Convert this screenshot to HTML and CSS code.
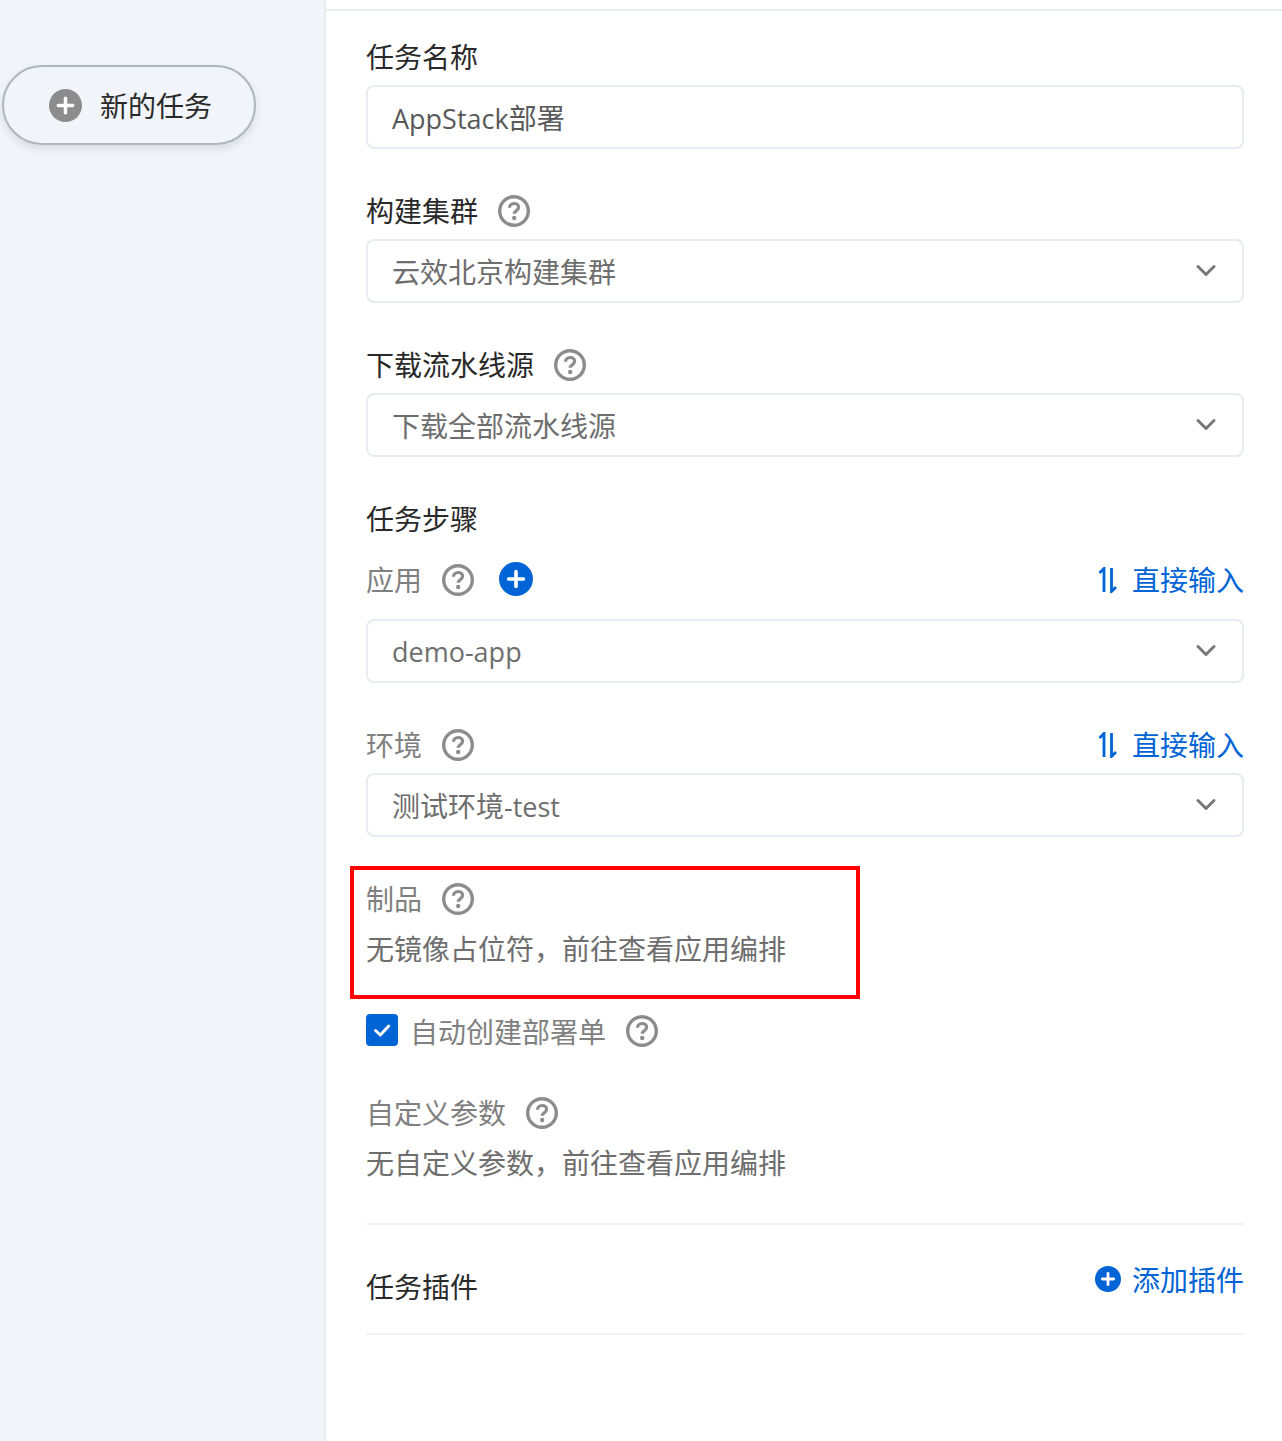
FILE: index.html
```html
<!DOCTYPE html>
<html lang="zh-CN">
<head>
<meta charset="utf-8">
<title>任务</title>
<link rel="stylesheet" href="styles.css">
</head>
<body>
<svg class="sprites" width="0" height="0" aria-hidden="true">
  <symbol id="help" viewBox="0 0 32 32">
    <circle cx="16" cy="16" r="14.300" fill="none" stroke="currentColor" stroke-width="3.400"/>
    <path d="M11.500 12.800c0-2.600 2-4.300 4.600-4.300s4.500 1.500 4.500 3.800c0 3.400-4.400 3.500-4.400 6.500" fill="none" stroke="currentColor" stroke-width="3.200"/>
    <circle cx="16.200" cy="23" r="2.200" fill="currentColor"/>
  </symbol>
  <symbol id="plus" viewBox="0 0 32 32">
    <circle cx="16" cy="16" r="16" fill="currentColor"/>
    <path d="M16 9v14M9 16h14" fill="none" stroke="#fff" stroke-width="3.400" stroke-linecap="round"/>
  </symbol>
  <symbol id="chev" viewBox="0 0 20 14">
    <path d="M2 2.500l8 8 8-8" fill="none" stroke="currentColor" stroke-width="3" stroke-linecap="round" stroke-linejoin="round"/>
  </symbol>
  <symbol id="swap" viewBox="0 0 20 26">
    <path d="M1.500 6L6 1.500V25M13.500 1v23.500L18 20" fill="none" stroke="currentColor" stroke-width="2.800"/>
  </symbol>
</svg>
<div class="layout">
  <aside class="sidebar">
    <button class="new-task" type="button">
      <svg class="new-task-icon"><use href="#plus"/></svg>
      <span>新的任务</span>
    </button>
  </aside>
  <main class="panel">
    <div class="form">
      <section class="field">
        <div class="label"><span class="text">任务名称</span></div>
        <div class="control control-input"><span class="low"><span class="latin">AppStack</span>部署</span></div>
      </section>
      <section class="field">
        <div class="label"><span class="text">构建集群</span><svg class="help"><use href="#help"/></svg></div>
        <div class="control"><span>云效北京构建集群</span><svg class="chev"><use href="#chev"/></svg></div>
      </section>
      <section class="field">
        <div class="label"><span class="text">下载流水线源</span><svg class="help"><use href="#help"/></svg></div>
        <div class="control"><span>下载全部流水线源</span><svg class="chev"><use href="#chev"/></svg></div>
      </section>
      <section class="field">
        <div class="label"><span class="text">任务步骤</span></div>
        <div class="sublabel sublabel-app">
          <span class="muted text">应用</span><svg class="help"><use href="#help"/></svg><svg class="add"><use href="#plus"/></svg>
          <a class="link"><svg class="swap"><use href="#swap"/></svg><span class="text">直接输入</span></a>
        </div>
        <div class="control control-app"><span class="latin low">demo-app</span><svg class="chev"><use href="#chev"/></svg></div>
      </section>
      <section class="field">
        <div class="sublabel">
          <span class="muted text">环境</span><svg class="help"><use href="#help"/></svg>
          <a class="link"><svg class="swap"><use href="#swap"/></svg><span class="text">直接输入</span></a>
        </div>
        <div class="control"><span class="low">测试环境<span class="latin">-test</span></span><svg class="chev"><use href="#chev"/></svg></div>
      </section>
      <section class="field field-artifact">
        <div class="highlight"></div>
        <div class="sublabel"><span class="muted text">制品</span><svg class="help"><use href="#help"/></svg></div>
        <div class="note">无镜像占位符，前往查看应用编排</div>
      </section>
      <label class="check-row">
        <span class="checkbox"><svg viewBox="0 0 32 32"><path d="M9.500 16.500l4.800 4.500 8.500-9" fill="none" stroke="#fff" stroke-width="3" stroke-linecap="round" stroke-linejoin="round"/></svg></span>
        <span class="muted low">自动创建部署单</span><svg class="help low"><use href="#help"/></svg>
      </label>
      <section class="field field-params">
        <div class="sublabel"><span class="muted text">自定义参数</span><svg class="help"><use href="#help"/></svg></div>
        <div class="note">无自定义参数，前往查看应用编排</div>
      </section>
      <section class="plugins">
        <div class="plugins-title">任务插件</div>
        <a class="link link-add"><svg class="add-small"><use href="#plus"/></svg>添加插件</a>
      </section>
    </div>
  </main>
</div>
</body>
</html>
```

FILE: styles.css
```css
* { box-sizing: border-box; }
html, body { margin: 0; padding: 0; }
body {
  font-family: "Noto Sans CJK SC", "Noto Sans", sans-serif;
  font-size: 28px;
  color: #292929;
  background: #fff;
}
.sprites { position: absolute; }
.layout { display: flex; height: 1441px; overflow: hidden; }
.sidebar {
  width: 326px;
  flex: none;
  background: #f1f5f9;
  border-right: 2px solid #e8ebef;
  padding: 65px 0 0 2px;
}
.new-task {
  display: flex;
  align-items: center;
  width: 254px;
  height: 80px;
  padding: 0 0 0 45px;
  border: 2px solid #b1b5bc;
  border-radius: 40px;
  background: #f1f5f9;
  box-shadow: 0 4px 8px rgba(0, 0, 0, .1);
  font: inherit;
  color: #292929;
  line-height: 40px;
}
.new-task-icon { width: 33px; height: 33px; color: #8c8c8c; margin-right: 18px; }
.panel { flex: 1; }
.form {
  border-top: 2px solid #e8ebef;
  margin-top: 9px;
  padding: 26px 38px 0 40px;
}
.field { margin-bottom: 42px; position: relative; }
.label, .sublabel {
  display: flex;
  align-items: center;
  height: 40px;
  line-height: 40px;
  margin-bottom: 8px;
}
.text { margin-bottom: 2px; }
.low { margin-top: 2px; }
.help { width: 32px; height: 32px; margin-left: 20px; color: #8c8c8c; flex: none; }
.muted { color: #808080; }
.control {
  display: flex;
  align-items: center;
  justify-content: space-between;
  height: 64px;
  padding: 0 26px 0 24px;
  border: 2px solid #e8ebef;
  border-radius: 8px;
  color: #6e6e6e;
  line-height: 40px;
}
.control-input { color: #595959; }
.latin { font-family: "Open Sans", sans-serif; font-size: 27px; }
.chev { width: 20px; height: 14px; color: #787878; }
.sublabel-app { margin: 21px 0 19px; }
.add { width: 34px; height: 34px; margin: 0 0 2px 25px; color: #0064d6; }
.add-small { width: 26px; height: 26px; margin-right: 11px; color: #0064d6; }
.link {
  display: flex;
  align-items: center;
  margin-left: auto;
  color: #0064d6;
  line-height: 40px;
}
.swap { width: 20px; height: 26px; margin-right: 14px; }
.field-artifact { height: 102px; margin-bottom: 29px; }
.highlight {
  position: absolute;
  left: -16px;
  top: -13px;
  width: 510px;
  height: 133px;
  border: 4px solid #f00;
}
.note { color: #6e6e6e; height: 40px; line-height: 40px; margin-top: 9px; }
.check-row { display: flex; align-items: center; height: 40px; margin-bottom: 43px; }
.checkbox {
  width: 32px;
  height: 32px;
  margin-right: 12px;
  background: #0064d6;
  border-radius: 4px;
  display: block;
}
.checkbox svg { display: block; width: 32px; height: 32px; }
.field-params { height: 89px; margin-bottom: 41px; }
.plugins {
  display: flex;
  justify-content: space-between;
  height: 112px;
  padding-top: 37px;
  border-top: 2px solid #f0f2f5;
  border-bottom: 2px solid #f0f2f5;
}
.plugins-title { line-height: 40px; margin-top: 4px; }
.link-add { align-self: flex-start; margin-top: -3px; }
```
